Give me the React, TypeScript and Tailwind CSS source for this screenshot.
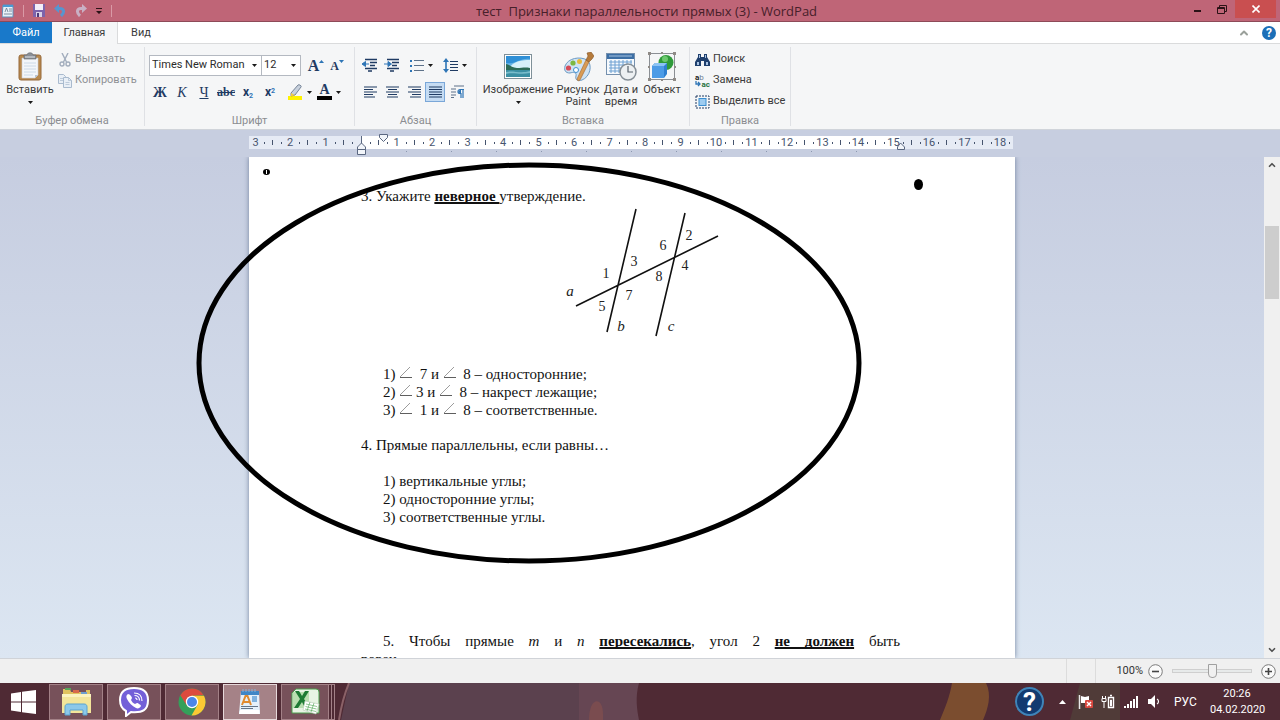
import type { ReactNode } from "react";
import { ChevronDown, ChevronUp } from "lucide-react";

const Caret = () => (
  <svg width="5" height="3" viewBox="0 0 5 3" className="shrink-0">
    <path d="M0 0h5L2.5 3z" fill="#1a1a1a" />
  </svg>
);

const Divider = () => <div className="my-[3px] w-px bg-[#dfe1e5]" />;

function Group({ label, className, children }: { label: string; className: string; children: ReactNode }) {
  return (
    <section className={`flex shrink-0 flex-col ${className}`}>
      <div className="h-[69px] shrink-0 pt-[5px]">{children}</div>
      <div className="text-center text-[11px] leading-4 text-[#8b8d91]">{label}</div>
    </section>
  );
}

function BigButton({ icon, label, className, caret }: { icon: ReactNode; label: string; className: string; caret?: boolean }) {
  return (
    <button className={`flex shrink-0 flex-col items-center text-[11px] leading-3 text-[#3b3b3b] ${className}`}>
      <span className="flex h-[35px] items-center">{icon}</span>
      <span className="whitespace-pre text-center">{label}</span>
      {caret && (
        <span className="flex h-2 items-end">
          <Caret />
        </span>
      )}
    </button>
  );
}

function SmallButton({ icon, label, muted }: { icon: ReactNode; label: string; muted?: boolean }) {
  return (
    <button
      className={`flex h-[21px] items-center gap-[3px] whitespace-nowrap text-[11px] ${muted ? "text-[#8f9195]" : "text-[#3b3b3b]"}`}
    >
      {icon}
      {label}
    </button>
  );
}

function Tool({ name, active, className, children }: { name: string; active?: boolean; className?: string; children: ReactNode }) {
  return (
    <button
      aria-label={name}
      className={`flex h-5 shrink-0 items-center justify-center gap-1 ${className ?? "w-[22px]"} ${
        active ? "border border-[#7aa7d8] bg-[#c5dcf3]" : ""
      }`}
    >
      {children}
    </button>
  );
}

/* ---------- ribbon icons ---------- */

const PasteIcon = () => (
  <svg width="24" height="29" viewBox="0 0 24 29">
    <rect x="1" y="3" width="22" height="25" rx="2" fill="#b98a4e" stroke="#96693a" />
    <path d="M4 6h16v17l-3 3H4z" fill="#f4f7fa" stroke="#c9ced6" strokeWidth=".6" />
    <path d="M20 23h-3v3z" fill="#b7c4d2" />
    <path d="M6 11h12M6 14h12M6 17h12M6 20h12M6 23h9" stroke="#c3d3e2" strokeWidth=".8" />
    <path d="M6 3h3c0-3 6-3 6 0h3v4H6z" fill="#8b9097" stroke="#61666d" strokeWidth=".6" />
    <path d="M7 5h10" stroke="#dfe3e8" />
  </svg>
);

const CutIcon = () => (
  <svg width="12" height="14" viewBox="0 0 12 14" fill="none" stroke="#a2adbd" strokeWidth="1.4">
    <path d="M3 0l4.5 9M9 0L4.5 9" />
    <circle cx="3" cy="11" r="2" />
    <circle cx="9" cy="11" r="2" />
  </svg>
);

const CopyIcon = () => (
  <svg width="14" height="14" viewBox="0 0 14 14" fill="#e9eff6" stroke="#a9bace">
    <path d="M.5.5h5l2 2v7h-7z" />
    <path d="M5.500 3.500h5l3 3v7h-8z" />
    <path d="M10.500 3.500v3h3M7.500 8.500h4M7.500 10.500h4M2 4.500h3M2 6.500h3" fill="none" strokeWidth=".7" />
  </svg>
);

const HighlightIcon = () => (
  <svg width="16" height="16" viewBox="0 0 16 16">
    <path d="M1 12h14v4H1z" fill="#fff200" />
    <path d="M4 9l7-8c1-1 4 1 3 2L8 11l-4 1z" fill="#c8d1dd" stroke="#5c6c83" strokeWidth=".8" />
    <path d="M4 9l4 2-4 1.500z" fill="#f0c948" />
  </svg>
);

function IndentIcon({ right }: { right?: boolean }) {
  return (
    <svg width="16" height="14" viewBox="0 0 16 14" fill="none">
      <path d="M3 1.500h12M8 4.500h7M8 7.500h5M3 10.500h12M6 13h4" stroke="#1f3b63" strokeWidth="1.300" />
      {right ? (
        <path d="M0 6h4V3.500L7.500 6 4 8.500V6" fill="#2e75b6" stroke="#2e75b6" />
      ) : (
        <path d="M7 6H3.500V3.500L0 6l3.500 2.500V6" fill="#2e75b6" stroke="#2e75b6" />
      )}
    </svg>
  );
}

const BulletsIcon = () => (
  <svg width="14" height="13" viewBox="0 0 14 13">
    <path d="M0 1h2v2H0zM0 6h2v2H0zM0 11h2v2H0z" fill="#2e75b6" />
    <path d="M4 1.500h10M4 6.500h10M4 11.500h10" stroke="#5d7189" />
  </svg>
);

const SpacingIcon = () => (
  <svg width="15" height="15" viewBox="0 0 15 15">
    <path d="M3 0l3 4H3.800v7H6l-3 4-3-4h2.200V4H0z" fill="#2e75b6" />
    <path d="M7 3.500h8M7 6.500h8M7 9.500h8M7 12.500h8" stroke="#1f3b63" />
  </svg>
);

const alignPaths = {
  left: "M0 1h13M0 3.500h9M0 6h13M0 8.500h9M0 11h11",
  center: "M0 1h13M2 3.500h9M0 6h13M2 8.500h9M1 11h11",
  right: "M0 1h13M4 3.500h9M0 6h13M4 8.500h9M2 11h11",
  justify: "M0 1h13M0 3.500h13M0 6h13M0 8.500h13M0 11h13",
};

const AlignIcon = ({ kind }: { kind: keyof typeof alignPaths }) => (
  <svg width="13" height="12" viewBox="0 0 13 12">
    <path d={alignPaths[kind]} stroke="#1f3b63" strokeWidth="1.200" />
  </svg>
);

const ParagraphIcon = () => (
  <svg width="14" height="14" viewBox="0 0 14 14" fill="none">
    <path d="M3 1h10M0 4h5M0 7h5M0 10h5M0 12.500h3" stroke="#5d7189" />
    <path d="M13 4.500H9a2 2 0 0 0 0 4h1V13M12 4.500V13" stroke="#2e75b6" strokeWidth="1.200" />
    <path d="M10 5H9a1.500 1.500 0 0 0 0 3h1z" fill="#2e75b6" />
  </svg>
);

const PictureIcon = () => (
  <svg width="28" height="25" viewBox="0 0 28 25">
    <rect x=".5" y=".5" width="27" height="24" fill="#fff" stroke="#7f9099" />
    <path d="M2 2h24v21H2z" fill="#69b5e6" />
    <path d="M2 2h24v3C18 3 10 11 2 9z" fill="#2f8fd6" />
    <path d="M6 13c4-6 12-7 20-7v8H6z" fill="#d7f0fa" />
    <path d="M2 10c3 0 6 4 11 4s8-1 13 0v3H2z" fill="#2d6b57" />
    <path d="M2 16h24v7H2z" fill="#3b8fa3" />
    <path d="M2 18c7-2 14 2 24-1v2C16 21 9 18 2 20z" fill="#79bccb" />
  </svg>
);

const PaintIcon = () => (
  <svg width="32" height="30" viewBox="0 0 32 30">
    <path d="M3 14C6 6 18 4 25 8c6 5 3 17-5 20-5 2-7-1-6-4 1-4-3-4-6-3-5 0-6-3-5-7z" fill="#cfe3f4" stroke="#6d9bc4" />
    <circle cx="6.500" cy="16" r="2.600" fill="#d64b57" />
    <circle cx="11" cy="11" r="2.600" fill="#7db843" />
    <circle cx="17.500" cy="9.500" r="2.500" fill="#e8b83b" />
    <circle cx="14" cy="18" r="2.500" fill="#fff" stroke="#3f8fd1" />
    <path d="M24 8l3 2-9 18c-1 1-3 1-3-1z" fill="#d99c55" stroke="#a8703a" strokeWidth=".7" />
    <path d="M24 8l2-4-1-3 4-1 3 4-2 3-3 3z" fill="#b57a3b" stroke="#855424" strokeWidth=".6" />
  </svg>
);

const DateIcon = () => (
  <svg width="31" height="29" viewBox="0 0 31 29">
    <rect x=".5" y="1.500" width="28" height="21" fill="#f5f9fd" stroke="#7590ae" />
    <path d="M1 2h27v5H1z" fill="#3d6fa5" />
    <path d="M3 4h23" stroke="#a8c5e2" />
    <path d="M3 10h23M3 13h23M3 16h23M3 19h23M5 8v13M9 8v13M13 8v13M17 8v13M21 8v13M25 8v13" stroke="#6da0d2" />
    <circle cx="22" cy="20" r="8" fill="#edf0f2" stroke="#858e96" strokeWidth="1.500" />
    <path d="M22 14v6h5" fill="none" stroke="#59636c" strokeWidth="1.200" />
  </svg>
);

const ObjectIcon = () => (
  <svg width="28" height="29" viewBox="0 0 28 29">
    <path d="M1.500 1.500h25v26h-25z" fill="none" stroke="#8b8f94" />
    <circle cx="18" cy="10.500" r="7.500" fill="#2f9a3a" />
    <circle cx="17" cy="7" r="3" fill="#6cc96e" />
    <path d="M4 14l3-3h12v11l-3 4H4z" fill="#2f7fd0" />
    <path d="M4 14l3-3h12l-3 3z" fill="#8cc3f4" />
    <path d="M4 14h12v12H4z" fill="#4c9be6" />
    <path d="M0 0h3v3H0zM25 0h3v3h-3zM0 26h3v3H0zM25 26h3v3h-3zM13 0h2v2h-2zM13 27h2v2h-2zM0 14h2v2H0zM26 14h2v2h-2z" fill="#8f8a86" />
  </svg>
);

const FindIcon = () => (
  <svg width="15" height="14" viewBox="0 0 15 14">
    <path d="M3 1h3v3h3V1h3v3l3 5v4H9V8H6v5H0V9l3-5z" fill="#1f3f6d" />
    <path d="M2 9h2v3H2zM11 9h2v3h-2zM4 2h1v3H4zM10 2h1v3h-1z" fill="#a9c3e3" />
  </svg>
);

const ReplaceIcon = () => (
  <span className="flex w-[15px] flex-col text-[8px] leading-[7px] font-bold">
    <span className="text-left text-[#222]">
      a<span className="font-normal text-[#6b7d92]">b</span>
    </span>
    <span className="flex items-center justify-between text-[#27713c]">
      <svg width="6" height="6" viewBox="0 0 6 6" className="shrink-0">
        <path d="M1 0v3h4M3 1l2 2-2 2" fill="none" stroke="#2e75b6" strokeWidth="1.300" />
      </svg>
      ac
    </span>
  </span>
);

const SelectAllIcon = () => (
  <svg width="15" height="14" viewBox="0 0 15 14">
    <rect x="1" y="1" width="13" height="12" fill="none" stroke="#1f3b63" strokeDasharray="2 1" />
    <rect x="4" y="3.500" width="7" height="7" fill="#9ccbf0" stroke="#3b8ed0" />
  </svg>
);

/* ---------- window chrome ---------- */

function TitleBar() {
  return (
    <header className="flex h-[22px] shrink-0 border-b border-[#8e4a58] bg-[#bf6577] font-['Open_Sans',sans-serif]">
      <div className="flex w-[108px] items-center gap-[9px] pl-[2px]">
        <svg width="12" height="14" viewBox="0 0 12 14" className="shrink-0">
          <path d="M1 1h10v12H0z" fill="#e8f1f8" stroke="#5f8fb8" />
          <path d="M1 1h10v2H1z" fill="#4a9ad4" />
          <path d="M3 8l1.500-4L6 8M7 5h3M7 7h3M2 10h8" fill="none" stroke="#66778a" strokeWidth=".8" />
        </svg>
        <span className="h-3 w-px shrink-0 bg-[#d99aa6]" />
        <button aria-label="Сохранить" className="shrink-0">
          <svg width="12" height="13" viewBox="0 0 12 13">
            <path d="M0 0h12v13H0z" fill="#7d63ab" />
            <path d="M2 0h8v6H2z" fill="#f3eef8" />
            <path d="M3 8h6v5H3z" fill="#d9d2e6" />
            <path d="M4 9h2v4H4z" fill="#4d3a78" />
          </svg>
        </button>
        <button aria-label="Отменить" className="shrink-0">
          <svg width="12" height="13" viewBox="0 0 12 13" fill="none" stroke="#5795cf">
            <path d="M2 4.500h4c4 0 5 4 1 7.500" strokeWidth="3" />
            <path d="M0 4.500L5 0v9z" fill="#5795cf" stroke="none" />
          </svg>
        </button>
        <button aria-label="Вернуть" className="shrink-0">
          <svg width="12" height="13" viewBox="0 0 12 13" fill="none" stroke="#c9b0c4">
            <path d="M10 4.500H6c-4 0-5 4-1 7.500" strokeWidth="3" />
            <path d="M12 4.500L7 0v9z" fill="#c9b0c4" stroke="none" />
          </svg>
        </button>
        <button aria-label="Настройка панели" className="shrink-0">
          <svg width="6" height="6" viewBox="0 0 6 6">
            <path d="M0 0h6v1H0zM0 3h6L3 6z" fill="#2a1216" />
          </svg>
        </button>
        <span className="h-3 w-px shrink-0 bg-[#d99aa6]" />
      </div>
      <h1 className="flex-1 whitespace-pre text-center text-[13px] leading-[22px] text-[#47202a]">
        {"тест  Признаки параллельности прямых (3) - WordPad"}
      </h1>
      <div className="flex items-start pr-1">
        <button aria-label="Свернуть" className="flex h-[18px] w-6 items-center justify-center">
          <span className="mt-1 h-[2px] w-[7px] bg-[#2a1216]" />
        </button>
        <button aria-label="Восстановить" className="flex h-[18px] w-[26px] items-center justify-center">
          <svg width="10" height="9" viewBox="0 0 10 9" fill="none" stroke="#2a1216">
            <path d="M.5 2.500h7v6h-7zM.5 3.500h7M2.500 2V.5h7v6H8" />
          </svg>
        </button>
        <button aria-label="Закрыть" className="flex h-[18px] w-[41px] items-center justify-center bg-[#c94f50]">
          <svg width="8" height="8" viewBox="0 0 8 8">
            <path d="M.5.5l7 7M7.500.5l-7 7" stroke="#fff" strokeWidth="1.600" />
          </svg>
        </button>
      </div>
    </header>
  );
}

function Tabs() {
  return (
    <nav className="flex h-[22px] shrink-0 items-stretch border-b border-[#dadbdc] bg-white text-[11px] text-[#3b3b3b]">
      <button className="w-[52px] bg-[#1979ca] pt-px text-white">Файл</button>
      <button className="-mb-px w-[66px] border-r border-[#dadbdc] bg-[#f5f6f7]">Главная</button>
      <button className="w-[46px] pt-px">Вид</button>
      <div className="ml-auto flex items-center gap-3 pr-1">
        <button aria-label="Свернуть ленту">
          <ChevronUp size={12} strokeWidth={4} color="#9aa09a" />
        </button>
        <button
          aria-label="Справка"
          className="flex h-[14px] w-[14px] items-center justify-center rounded-full bg-[#1b6fb8] text-[12px] font-bold text-white"
        >
          ?
        </button>
      </div>
    </nav>
  );
}

function Combo({ name, value, className }: { name: string; value: string; className: string }) {
  return (
    <div className={`relative flex h-[21px] items-center border border-[#b4b9c1] bg-white ${className}`}>
      <select aria-label={name} className="h-full w-full appearance-none bg-transparent pl-[2px] text-[11px] text-[#2b2b2b] outline-none">
        <option>{value}</option>
      </select>
      <span className="pointer-events-none absolute right-1 flex">
        <Caret />
      </span>
    </div>
  );
}

function Ribbon() {
  const letter = "font-['Liberation_Serif',serif] text-[#1f3b63]";
  return (
    <div className="flex h-[86px] shrink-0 border-b border-[#d0d4da] bg-[#f5f6f7]">
      <Group label="Буфер обмена" className="w-[144px]">
        <div className="flex">
          <BigButton icon={<PasteIcon />} label="Вставить" className="w-[58px] pl-[2px]" caret />
          <div>
            <SmallButton muted icon={<span className="flex w-[14px] justify-center"><CutIcon /></span>} label="Вырезать" />
            <SmallButton muted icon={<CopyIcon />} label="Копировать" />
          </div>
        </div>
      </Group>
      <Divider />
      <Group label="Шрифт" className="w-[209px]">
        <div className="flex items-center pl-1 pt-[6px]">
          <Combo name="Шрифт" value="Times New Roman" className="w-[113px]" />
          <Combo name="Размер" value="12" className="-ml-px w-10" />
          <Tool name="Увеличить размер" className="ml-1 w-[22px]">
            <span className={`${letter} text-[16px] font-bold`}>A</span>
            <svg width="5" height="3" viewBox="0 0 5 3" className="-ml-1 mb-2"><path d="M0 3h5L2.500 0z" fill="#2e75b6" /></svg>
          </Tool>
          <Tool name="Уменьшить размер" className="w-5">
            <span className={`${letter} text-[12px] font-bold`}>A</span>
            <svg width="5" height="3" viewBox="0 0 5 3" className="-ml-1 mb-2"><path d="M0 0h5L2.500 3z" fill="#2e75b6" /></svg>
          </Tool>
        </div>
        <div className="flex items-center pl-1 pt-[6px]">
          <Tool name="Полужирный"><span className={`${letter} text-[14px] font-bold`}>Ж</span></Tool>
          <Tool name="Курсив"><span className={`${letter} text-[14px] italic`}>К</span></Tool>
          <Tool name="Подчеркнутый"><span className={`${letter} text-[14px] underline`}>Ч</span></Tool>
          <Tool name="Зачеркнутый"><span className={`${letter} text-[12px] font-bold line-through`}>abc</span></Tool>
          <Tool name="Подстрочный">
            <span className="text-[12px] font-bold leading-3 text-[#1f3b63]">x<sub className="text-[7px] text-[#2e75b6]">2</sub></span>
          </Tool>
          <Tool name="Надстрочный">
            <span className="text-[12px] font-bold leading-3 text-[#1f3b63]">x<sup className="text-[7px] text-[#2e75b6]">2</sup></span>
          </Tool>
          <Tool name="Цвет выделения" className="ml-1 w-7"><HighlightIcon /><Caret /></Tool>
          <Tool name="Цвет текста" className="w-8">
            <span className={`border-b-4 border-black px-[2px] text-[14px] leading-3 font-bold ${letter}`}>A</span>
            <Caret />
          </Tool>
        </div>
      </Group>
      <Divider />
      <Group label="Абзац" className="w-[121px]">
        <div className="flex items-center pl-1 pt-[6px]">
          <Tool name="Уменьшить отступ"><IndentIcon /></Tool>
          <Tool name="Увеличить отступ"><IndentIcon right /></Tool>
          <Tool name="Список" className="w-9"><BulletsIcon /><Caret /></Tool>
          <Tool name="Интервал" className="w-8"><SpacingIcon /><Caret /></Tool>
        </div>
        <div className="flex items-center pl-1 pt-[7px]">
          <Tool name="По левому краю"><AlignIcon kind="left" /></Tool>
          <Tool name="По центру"><AlignIcon kind="center" /></Tool>
          <Tool name="По правому краю"><AlignIcon kind="right" /></Tool>
          <Tool name="По ширине" active className="w-5"><AlignIcon kind="justify" /></Tool>
          <Tool name="Абзац" className="w-[26px]"><ParagraphIcon /></Tool>
        </div>
      </Group>
      <Divider />
      <Group label="Вставка" className="w-[212px]">
        <div className="flex pl-1">
          <BigButton icon={<PictureIcon />} label="Изображение" className="w-[74px]" caret />
          <BigButton icon={<PaintIcon />} label={"Рисунок\nPaint"} className="w-[46px]" />
          <BigButton icon={<DateIcon />} label={"Дата и\nвремя"} className="w-10" />
          <BigButton icon={<ObjectIcon />} label="Объект" className="w-[42px]" />
        </div>
      </Group>
      <Divider />
      <Group label="Правка" className="w-[100px]">
        <div className="pl-[5px]">
          <SmallButton icon={<FindIcon />} label="Поиск" />
          <SmallButton icon={<ReplaceIcon />} label="Замена" />
          <SmallButton icon={<SelectAllIcon />} label="Выделить все" />
        </div>
      </Group>
      <Divider />
    </div>
  );
}

/* ---------- ruler ---------- */

const UNIT = 35.5;
const ZERO = 112;

function Ruler() {
  const marks = Array.from({ length: 22 }, (_, i) => i - 3);
  return (
    <div className="shrink-0 bg-[#c7cee0] pr-4">
      <svg width="766" height="27" viewBox="0 -6 766 27" className="mx-auto block">
        <rect width="764" height="13" fill="#e6ebf5" />
        <rect x={ZERO} width="539" height="13" fill="#fff" />
        <g fontFamily="Roboto, sans-serif" fontSize="11" textAnchor="middle" fill="#46546e">
          {marks.map((n) => {
            const x = ZERO + n * UNIT;
            return (
              <g key={n}>
                {n !== 0 && <text x={n === -3 ? x + 1 : x} y="10">{Math.abs(n)}</text>}
                <rect x={Math.round(x + 9)} y="6" width="1" height="2" />
                {n < 18 && (
                  <>
                    <rect x={Math.round(x + 17)} y="4" width="1" height="5" />
                    <rect x={Math.round(x + 26)} y="6" width="1" height="2" />
                  </>
                )}
              </g>
            );
          })}
          {Array.from({ length: 11 }, (_, i) => (
            <rect key={i} x={157 + i * 45} y="15" width="1" height="1" fill="#8c98b0" />
          ))}
        </g>
        <g fill="#f2f5fa" stroke="#5a6780">
          <path d="M112.500 0v9" />
          <path d="M130.500-1.500h8v3l-4 4-4-4z" />
          <path d="M108.500 13.500v-2.500l4-4 4 4v2.500zM108.500 13.500h8v5h-8z" />
          <path d="M648.500 13.500v-2.500l3-4 4 4v2.500z" />
        </g>
      </svg>
    </div>
  );
}

/* ---------- document ---------- */

const Angle = () => (
  <svg width="13" height="14" viewBox="0 0 13 14" className="inline-block align-baseline">
    <path d="M1 12L11 2" stroke="#9c9c9c" />
    <path d="M1 12.500h12" stroke="#5f5f5f" />
  </svg>
);

const digits: [string, number, number][] = [
  ["1", 46, 73],
  ["3", 74, 61],
  ["6", 103, 45],
  ["2", 129, 35],
  ["4", 125, 65],
  ["8", 99, 76],
  ["7", 69, 95],
  ["5", 42, 106],
];

const letters: [string, number, number][] = [
  ["a", 10, 91],
  ["b", 61, 126],
  ["c", 111, 126],
];

const LinesDiagram = () => (
  <svg width="170" height="160" viewBox="0 0 170 160" className="ml-[199px] block">
    <path d="M76 4L47 127M125 8L96 131M16 101L158 31" stroke="#111" strokeWidth="1.600" />
    <g fontFamily="Liberation Serif, serif" fontSize="14" textAnchor="middle" fill="#222">
      {digits.map(([t, x, y]) => (
        <text key={t} x={x} y={y}>{t}</text>
      ))}
      <g fontStyle="italic" fontSize="15">
        {letters.map(([t, x, y]) => (
          <text key={t} x={x} y={y}>{t}</text>
        ))}
      </g>
    </g>
  </svg>
);

const Strong = ({ children }: { children: ReactNode }) => (
  <b className="underline decoration-2 [text-decoration-skip-ink:none]">{children}</b>
);

function Page() {
  const sp = "\u00a0";
  return (
    <article className="relative mx-auto h-full w-[766px] bg-white pl-28 pr-[115px] pt-[30px] font-['Liberation_Serif',serif] text-[15px] leading-[18px] text-[#111] shadow-[0_0_5px_#70819c]">
      <p>
        3. Укажите <Strong>неверное </Strong>утверждение.
      </p>
      <LinesDiagram />
      <div className="pl-[22px]">
        <p className="h-[18px]">1) <Angle />{sp} 7 и <Angle />{sp} 8 – односторонние;</p>
        <p className="h-[18px]">2) <Angle /> 3 и <Angle />{sp} 8 – накрест лежащие;</p>
        <p className="h-[18px]">3) <Angle />{sp} 1 и <Angle />{sp} 8 – соответственные.</p>
      </div>
      <p className="pb-[18px] pt-[17px]">4. Прямые параллельны, если равны…</p>
      <div className="pl-[22px]">
        <p>1) вертикальные углы;</p>
        <p>2) односторонние углы;</p>
        <p>3) соответственные углы.</p>
      </div>
      <p className="pt-[106px]">
        <span className="block pl-[22px] [text-align-last:justify]">
          5. Чтобы прямые <i>m</i> и <i>n</i> <Strong>пересекались</Strong>, угол 2 <Strong>не должен</Strong> быть
        </span>
        <span className="block">равен</span>
      </p>
      {/* freehand marks over the text */}
      <svg className="pointer-events-none absolute left-0 top-0 h-full w-full overflow-visible">
        <ellipse cx="280" cy="206" rx="330" ry="198" fill="none" stroke="#000" strokeWidth="5" />
        <ellipse cx="17.500" cy="15" rx="3.500" ry="3" fill="#000" />
        <path d="M17.500 13v4" stroke="#fff" />
        <ellipse cx="669.500" cy="27.500" rx="4.500" ry="5.500" fill="#000" />
      </svg>
    </article>
  );
}

function Workspace() {
  return (
    <main className="flex min-h-0 flex-1">
      <div className="min-w-0 flex-1 overflow-hidden bg-linear-to-b from-[#c6cde0] to-[#dce6f2]">
        <Page />
      </div>
      <div className="flex w-4 flex-col items-center bg-[#f0f0f0]">
        <button aria-label="Вверх" className="flex h-4 items-center">
          <ChevronUp size={10} strokeWidth={4} color="#505050" />
        </button>
        <div className="w-full flex-1 px-px pt-[53px]">
          <div className="h-[73px] bg-[#cdcdcd]" />
        </div>
        <button aria-label="Вниз" className="flex h-4 items-center">
          <ChevronDown size={10} strokeWidth={4} color="#505050" />
        </button>
      </div>
    </main>
  );
}

function ZoomButton({ name, d }: { name: string; d: string }) {
  return (
    <button aria-label={name}>
      <svg width="15" height="15" viewBox="0 0 15 15" fill="none">
        <circle cx="7.500" cy="7.500" r="6.800" fill="#fafafa" stroke="#7c7c7c" />
        <path d={d} stroke="#444" strokeWidth="1.600" />
      </svg>
    </button>
  );
}

function StatusBar() {
  return (
    <footer className="flex h-[25px] shrink-0 items-center justify-end border-t border-[#d0d3d8] bg-[#f0f0f0] pr-1 text-[11px] text-[#333]">
      <span className="h-full w-[30px] border-x border-[#dcdcdc]" />
      <span className="w-[52px] pr-[5px] text-right">100%</span>
      <ZoomButton name="Уменьшить" d="M4 7.500h7" />
      <input
        type="range"
        aria-label="Масштаб"
        defaultValue={50}
        className="mx-[9px] h-4 w-20 appearance-none bg-transparent [&::-webkit-slider-runnable-track]:h-[4px] [&::-webkit-slider-runnable-track]:border [&::-webkit-slider-runnable-track]:border-[#cfcfcf] [&::-webkit-slider-runnable-track]:bg-[#e7eaea] [&::-webkit-slider-thumb]:-mt-[6px] [&::-webkit-slider-thumb]:h-[14px] [&::-webkit-slider-thumb]:w-[9px] [&::-webkit-slider-thumb]:appearance-none [&::-webkit-slider-thumb]:rounded-b-[4px] [&::-webkit-slider-thumb]:border [&::-webkit-slider-thumb]:border-[#a0a0a0] [&::-webkit-slider-thumb]:bg-[#f0f0f0]"
      />
      <ZoomButton name="Увеличить" d="M4 7.500h7M7.500 4v7" />
    </footer>
  );
}

/* ---------- taskbar ---------- */

const ExplorerIcon = () => (
  <svg width="31" height="29" viewBox="0 0 31 29">
    <path d="M2 2h7l1 3h15V3h4v23H2z" fill="#e0c35f" />
    <path d="M4 1h6v2H4z" fill="#58a55c" />
    <path d="M12 3h6v3h-6z" fill="#d86a4a" />
    <path d="M20 5h6v2h-6z" fill="#6e9fd0" />
    <path d="M1 7h29v19H1z" fill="#f3e59a" />
    <path d="M1 7h29v3H1z" fill="#fbf3c0" />
    <path d="M4 28v-8c0-2 1-3 3-3h16c2 0 3 1 3 3v8h-4v-5H9v5z" fill="#8cc8ea" stroke="#5aa3d0" />
  </svg>
);

const ViberIcon = () => (
  <svg width="30" height="30" viewBox="0 0 30 30">
    <path d="M15 1C5 1 1 5 1 13c0 6 2 9 6 11v5l5-4c12 1 17-2 17-12C29 5 25 1 15 1z" fill="#7360d8" stroke="#fff" strokeWidth="2" />
    <path d="M9 7c-2 1-2 3-1 5 2 4 5 7 9 9 2 1 4 0 5-2 0-1-3-3-4-3l-2 1c-2-1-3-2-4-4l1-2c0-1-2-4-4-4z" fill="#fff" />
    <path d="M15 6c5 0 8 3 8 8M15.500 8.500c3 0 5 2 5 5M16 11c1 0 2 1 2 2" fill="none" stroke="#fff" strokeWidth="1.200" />
  </svg>
);

const ChromeIcon = () => (
  <svg width="28" height="28" viewBox="0 0 28 28">
    <circle cx="14" cy="14" r="13.500" fill="#34a05a" />
    <path d="M14 14L2.300 7.200A13.500 13.500 0 0 1 25.700 7.200L14 7.800z" fill="#dd4b3e" />
    <path d="M14 7.800h12a13.500 13.500 0 0 1-12.500 19.700L19.500 17z" fill="#fbc934" />
    <path d="M2.300 7.200L8.500 17 14 8z" fill="#dd4b3e" />
    <circle cx="14" cy="14" r="6.200" fill="#fff" />
    <circle cx="14" cy="14" r="5" fill="#4a86e8" />
  </svg>
);

const WordPadIcon = () => (
  <svg width="22" height="26" viewBox="0 0 22 26">
    <path d="M2 2h18l1 23H0z" fill="#e4f0fa" />
    <path d="M2 2h18v4H2z" fill="#3f86c6" />
    <path d="M4 0v3M7 0v3M10 0v3M13 0v3M16 0v3" stroke="#83b4dd" />
    <path d="M3 16l3.500-9h2L12 16M4.500 13h6" fill="none" stroke="#e08a2e" strokeWidth="2" />
    <path d="M13 7h5v6h-5z" fill="#7fb2df" />
    <path d="M2 17.500h17M2 19.500h12" stroke="#44566b" strokeWidth=".8" />
    <path d="M1 21h19.500v4H0z" fill="#fff" />
  </svg>
);

const ExcelIcon = () => (
  <svg width="29" height="27" viewBox="0 0 29 27">
    <path d="M5 1h20a3 3 0 0 1 3 3v21H1V5z" fill="#e8f4e4" stroke="#4da04f" />
    <path d="M2 4h16v16H2z" fill="#b9dfb0" />
    <path d="M4 3h4l3 5 3-5h4l-5 8 6 9h-5l-3-6-4 6H3l6-9z" fill="#1e7b34" />
    <path d="M14 13l14 3-3 10-13-4z" fill="#fff" stroke="#b7c9b5" strokeWidth=".6" />
    <path d="M15 16l11 2.500M14.500 18.500l11 2.500M14 21l11 2.500M19 14l-3 9M23 15l-3 9" stroke="#5fae63" strokeWidth=".7" />
  </svg>
);

const apps = [
  { name: "Проводник", icon: <ExplorerIcon />, active: false },
  { name: "Viber", icon: <ViberIcon />, active: false },
  { name: "Chrome", icon: <ChromeIcon />, active: false },
  { name: "WordPad", icon: <WordPadIcon />, active: true },
];

function Taskbar() {
  return (
    <div className="relative flex h-[37px] shrink-0 items-center bg-[#4f2a34] text-white">
      {/* wallpaper showing through */}
      <svg className="absolute left-0 top-0 h-full w-full" viewBox="0 0 1280 37" preserveAspectRatio="none">
        <path d="M349 0h240c-2 12 2 25 10 37H341z" fill="#5b414e" />
        <path d="M349 0c-5 12-8 24-10 37" stroke="#8a6167" strokeWidth="2" fill="none" />
        <path d="M579 0h60c-4 14-2 27 0 37h-60z" fill="#664653" />
        <path d="M589 37c0-24 14-24 14-6v6z" fill="#7a4c4f" />
        <path d="M952 0h34c6 12 2 26-3 37h-43c5-12 10-24 12-37z" fill="#7b4d2f" />
        <path d="M1080 0h40v37h-50z" fill="#503b38" />
      </svg>
      <button aria-label="Пуск" className="relative flex h-full w-[47px] items-center justify-center">
        <svg width="25" height="24" viewBox="0 0 25 24" fill="#fff">
          <path d="M0 3.500L10 2v9.500H0zM11 1.800L25 0v11.500H11zM0 12.500h10V22L0 20.500zM11 12.500h14V24l-14-1.800z" />
        </svg>
      </button>
      <div className="relative flex gap-1 pl-[2px]">
        {apps.map((app) => (
          <button
            key={app.name}
            aria-label={app.name}
            className={`flex h-9 w-[54px] items-center justify-center border ${
              app.active ? "border-[#e6d8da] bg-[#a58287]" : "border-[#a38187] bg-[#77515a]"
            }`}
          >
            {app.icon}
          </button>
        ))}
        <button aria-label="Excel" className="flex h-9">
          <span className="flex h-9 w-12 items-center justify-center border border-[#a38187] bg-[#77515a]">
            <ExcelIcon />
          </span>
          <span className="h-9 w-[3px] border-y border-r border-[#a38187]" />
          <span className="h-9 w-[3px] border-y border-r border-[#a38187]" />
        </button>
      </div>
      <div className="relative ml-auto flex items-center pr-4">
        <button
          aria-label="Справка"
          className="flex h-[29px] w-[29px] items-center justify-center rounded-full border-2 border-[#3f84b8] bg-[#123a70] text-[26px] font-bold leading-none text-white"
        >
          ?
        </button>
        <svg width="7" height="4" viewBox="0 0 7 4" className="ml-[15px]"><path d="M3.500 0L7 4H0z" fill="#fff" /></svg>
        <svg width="15" height="15" viewBox="0 0 15 15" className="ml-[12px]">
          <path d="M1.500 1v14" stroke="#e8e8e8" strokeWidth="1.500" />
          <path d="M3 2l4 1 4-1v7H3z" fill="#fff" />
          <rect x="7" y="6" width="8" height="8" rx="1" fill="#d8473f" />
          <path d="M9 8l4 4M13 8l-4 4" stroke="#fff" strokeWidth="1.400" />
        </svg>
        <svg width="14" height="15" viewBox="0 0 14 15" className="ml-2" fill="none" stroke="#fff">
          <path d="M1 4.500h4v3H1zM1.500 2v2M4.500 2v2M3 8v6" />
          <path d="M7.500 3.500h5v10h-5zM9 1.500h2" strokeWidth="1.400" />
          <path d="M9.500 6h1v6h-1z" fill="#fff" />
        </svg>
        <svg width="14" height="12" viewBox="0 0 14 12" className="ml-[9px]" fill="#fff">
          <path d="M0 10h2v2H0zM3 8h2v4H3zM6 5h2v7H6zM9 3h2v9H9zM12 0h2v12h-2z" />
        </svg>
        <svg width="12" height="13" viewBox="0 0 12 13" className="ml-[10px]">
          <path d="M0 4h3l4-4v13L3 9H0z" fill="#fff" />
          <path d="M9 4c2 1 2 4 0 5" fill="none" stroke="#fff" strokeWidth="1.200" />
        </svg>
        <span className="ml-[14px] w-6 text-[12px]">РУС</span>
        <div className="ml-3 w-[54px] text-center text-[11px] leading-4">
          <div>20:26</div>
          <div>04.02.2020</div>
        </div>
      </div>
    </div>
  );
}

export default function App() {
  return (
    <div className="flex h-screen flex-col overflow-hidden font-[Roboto,sans-serif]">
      <TitleBar />
      <Tabs />
      <Ribbon />
      <Ruler />
      <Workspace />
      <StatusBar />
      <Taskbar />
    </div>
  );
}
